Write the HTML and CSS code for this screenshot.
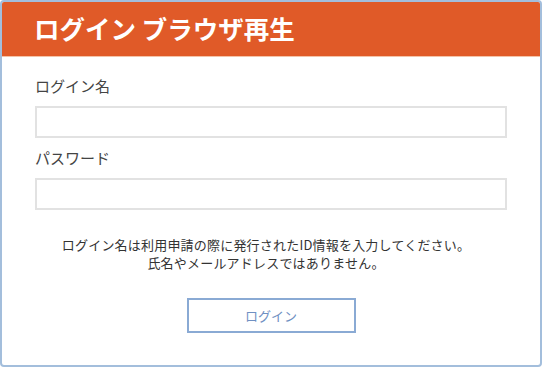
FILE: index.html
```html
<!DOCTYPE html>
<html lang="ja">
<head>
    <meta charset="UTF-8">
    <meta name="viewport" content="width=device-width, initial-scale=1.0">
    <title>ログイン ブラウザ再生</title>
    <link rel="stylesheet" href="styles.css">
</head>
<body>
    <div id="panel">
        <div id="header">ログイン ブラウザ再生</div>
        <form id="loginForm">
            <p class="label">ログイン名</p>
            <input type="text" class="field" id="loginName">
            <p class="label">パスワード</p>
            <input type="password" class="field" id="password">
            <p id="note">ログイン名は利用申請の際に発行されたID情報を入力してください。<br>氏名やメールアドレスではありません。</p>
            <div id="btnRow">
                <button type="submit" id="loginBtn">ログイン</button>
            </div>
        </form>
    </div>
</body>
</html>
```

FILE: styles.css
```css
body{
    margin: 0;
    font-family: "Noto Sans CJK JP", "Noto Sans", sans-serif;
    color: #333;
    background: #fff;
}
#panel{
    width: 542px;
    height: 367px;
    box-sizing: border-box;
    border: 2px solid #a3bedc;
    border-radius: 4px;
    overflow: hidden;
}
#header{
    height: 55px;
    box-sizing: border-box;
    background-color: #e05a28;
    border-bottom: 1px solid #f4c3a8;
    color: #fff;
    font-size: 25.5px;
    font-weight: bold;
    line-height: 52px;
    padding-left: 32px;
}
#loginForm{
    padding: 18px 33px 0 33px;
}
.label{
    margin: 0 0 9px 0;
    font-size: 15px;
    line-height: 22px;
    color: #444;
}
.field{
    display: block;
    width: 100%;
    height: 32px;
    box-sizing: border-box;
    border: 2px solid #e2e2e2;
    margin: 0 0 9px 0;
    padding: 0 8px;
}
#note{
    margin: 26px 0 0 0;
    padding-right: 10px;
    font-size: 13px;
    line-height: 18px;
    letter-spacing: 0.2px;
    text-align: center;
    color: #333;
}
#btnRow{
    display: flex;
    justify-content: center;
    margin-top: 26px;
}
#loginBtn{
    width: 169px;
    height: 35px;
    background: #fff;
    border: 2px solid #8aaad4;
    color: #6f90c2;
    font-family: inherit;
    font-size: 13px;
}
```
